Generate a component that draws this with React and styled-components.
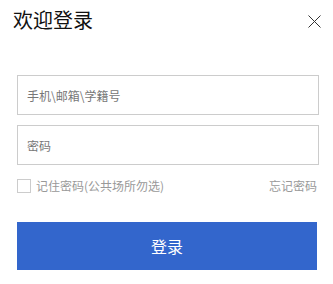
import React from "react";
import styled, { createGlobalStyle } from "styled-components";

const Global = createGlobalStyle`
  html, body { margin: 0; padding: 0; background: #fff; }
  body { font-family: "Noto Sans CJK SC", "Noto Sans", sans-serif; }
  * { box-sizing: border-box; }
`;

const Panel = styled.div`
  width: 333px;
  height: 284px;
  background: #fff;
`;

const Header = styled.div`
  display: flex;
  justify-content: space-between;
  align-items: flex-start;
  padding: 9px 12px 0 13px;
  height: 75px;
`;

const Title = styled.h1`
  margin: 0;
  font-size: 20px;
  line-height: 22px;
  font-weight: 400;
  color: #111;
`;

const CloseButton = styled.button`
  margin-top: 6px;
  width: 13px;
  height: 13px;
  padding: 0;
  border: 0;
  background: none;
  display: flex;
  cursor: pointer;
`;

const Form = styled.form`
  display: flex;
  flex-direction: column;
  padding: 0 15px 0 17px;
`;

const Fields = styled.div`
  display: flex;
  flex-direction: column;
  gap: 10px;
`;

const Input = styled.input`
  width: 302px;
  height: 40px;
  border: 1px solid #ccc;
  padding: 0 9px;
  font-family: inherit;
  font-size: 12px;
  color: #333;
  outline: none;
  &::placeholder { color: #777; }
`;

const Options = styled.div`
  margin-top: 14px;
  width: 300px;
  height: 14px;
  display: flex;
  justify-content: space-between;
  align-items: center;
`;

const Remember = styled.label`
  display: flex;
  align-items: center;
  gap: 5px;
  font-size: 12px;
  color: #999;
  line-height: 14px;
`;

const Box = styled.span`
  width: 14px;
  height: 14px;
  border: 1px solid #ccc;
  background: #fff;
  flex: none;
`;

const Forgot = styled.a`
  font-size: 12px;
  line-height: 14px;
  color: #999;
  text-decoration: none;
`;

const Submit = styled.button`
  margin-top: 29px;
  width: 300px;
  height: 48px;
  border: 0;
  background: #3366cc;
  color: #fff;
  font-family: inherit;
  font-size: 16px;
  cursor: pointer;
`;

export default function App() {
  return (
    <>
      <Global />
      <Panel>
        <Header>
          <Title>欢迎登录</Title>
          <CloseButton type="button" aria-label="关闭">
            <svg width="13" height="13" viewBox="0 0 13 13">
              <path d="M0.5 0.5 L12.5 12.5 M12.5 0.5 L0.5 12.5" stroke="#333" strokeWidth="1" fill="none" />
            </svg>
          </CloseButton>
        </Header>
        <Form onSubmit={(e) => e.preventDefault()}>
          <Fields>
            <Input placeholder="手机\邮箱\学籍号" />
            <Input type="password" placeholder="密码" />
          </Fields>
          <Options>
            <Remember>
              <Box />
              记住密码(公共场所勿选)
            </Remember>
            <Forgot href="#">忘记密码</Forgot>
          </Options>
          <Submit type="submit">登录</Submit>
        </Form>
      </Panel>
    </>
  );
}
